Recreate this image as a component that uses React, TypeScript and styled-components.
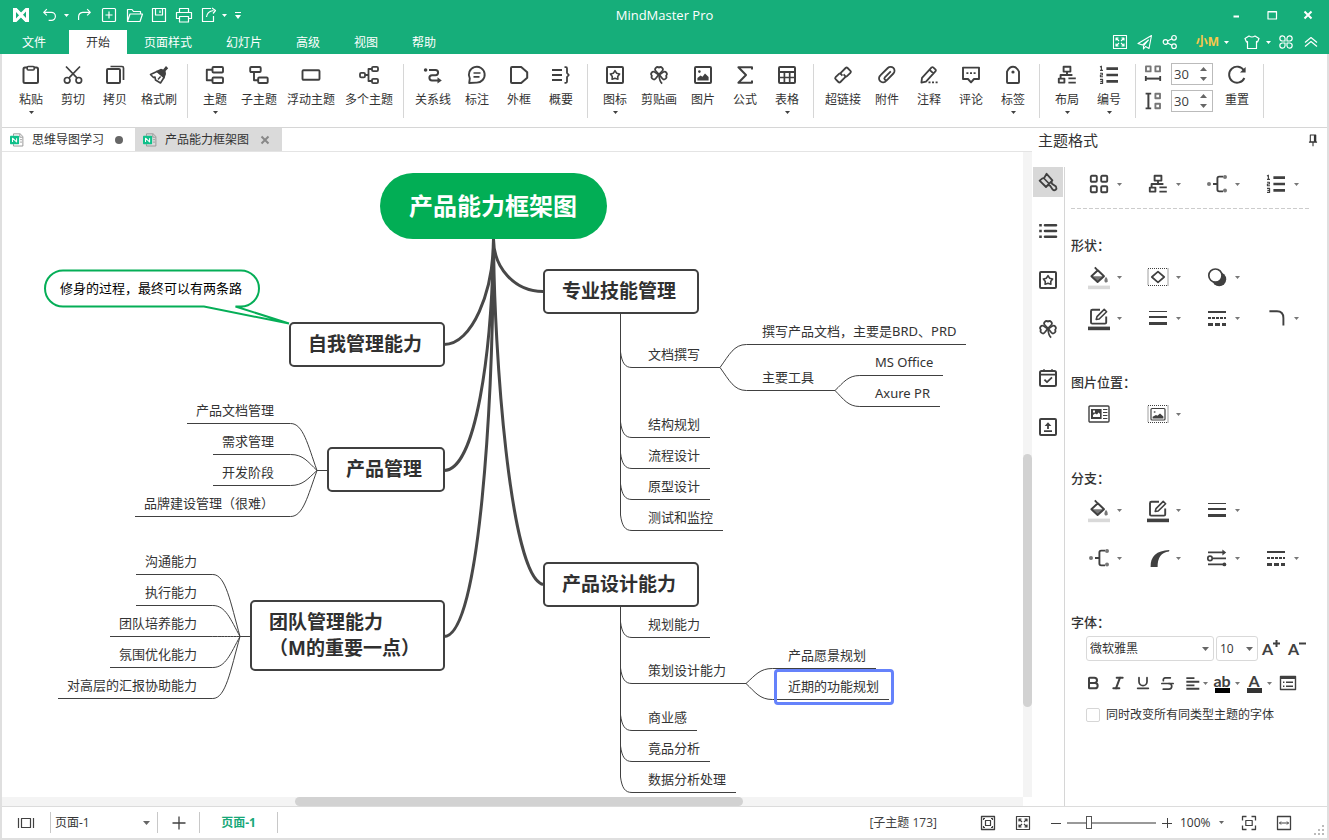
import React, { useState } from "react";
import type { ReactNode } from "react";
import styled, { createGlobalStyle, css } from "styled-components";
import { Bold, Italic, Underline, Strikethrough } from "lucide-react";

const GREEN = "#16ae7a";
const INK = "#404040";
const LINE = "#d6d6d6";

const GlobalStyle = createGlobalStyle`
  *, *::before, *::after { box-sizing: border-box; }
  body {
    margin: 0;
    background: #fff;
    color: #333;
    font: 12px/16px "Open Sans", "Noto Sans CJK SC", sans-serif;
  }
  button, input, select { font: inherit; color: inherit; }
  button {
    margin: 0;
    padding: 0;
    border: 0;
    background: none;
    cursor: pointer;
  }
  svg { display: block; flex: none; }
`;

/* ---------- icons ---------- */

const shapes: Record<string, ReactNode> = {
  paste: (
    <>
      <rect x="2.5" y="2.5" width="14.5" height="15.5" rx="1.5" />
      <rect x="6.2" y="1.5" width="7" height="3.5" rx="1" fill="#fff" strokeWidth="1.6" />
    </>
  ),
  cut: (
    <g strokeWidth="1.7">
      <circle cx="4.2" cy="15.3" r="2.8" />
      <circle cx="15.8" cy="15.3" r="2.8" />
      <path d="M3 1.5 14.2 13.2M17 1.5 5.8 13.2" />
    </g>
  ),
  copy: (
    <>
      <rect x="2" y="4" width="13" height="14" rx="1" />
      <path d="M5.5 1.5H17Q18.5 1.5 18.5 3V15" strokeWidth="1.7" />
    </>
  ),
  brush: (
    <>
      <path d="M8 6.5 1.5 9.5 4.5 12.5 6 12 6.5 15 11.5 18 15 12.5Z" strokeWidth="1.6" />
      <path d="M7 6 12 3.8 14.2 4.4 17 1 19.2 3.2 16.6 6 17 9 15.4 13.5Z" fill="currentColor" stroke="none" />
      <path d="M9 14.5 11.6 11.5" strokeWidth="1.4" />
    </>
  ),
  topic: (
    <g strokeWidth="1.9">
      <rect x="7.5" y="2" width="10.5" height="5.5" rx="1" />
      <rect x="7.5" y="12.5" width="10.5" height="5.5" rx="1" />
      <path d="M7.5 4.8H1.8V15.2H7.5" />
    </g>
  ),
  subtopic: (
    <g strokeWidth="1.9">
      <rect x="1.2" y="2" width="10.5" height="5" rx="1" />
      <rect x="9.2" y="12.5" width="9.5" height="5.5" rx="1" />
      <path d="M5 7V15.2H9.2" />
    </g>
  ),
  floating: <rect x="1.5" y="5.2" width="17" height="9.6" rx="1" strokeWidth="1.9" />,
  multi: (
    <g strokeWidth="1.8">
      <rect x="1" y="7.8" width="5" height="4.6" rx="1.2" />
      <rect x="13" y="1.8" width="6" height="4.4" rx="1.2" />
      <rect x="13" y="13.8" width="6" height="4.4" rx="1.2" />
      <path d="M6 10H9.5M13 4H9.5V16H13" />
    </g>
  ),
  relation: (
    <>
      <circle cx="2.6" cy="5" r="1.8" fill="currentColor" stroke="none" />
      <path d="M6 5H12.5A2.6 2.6 0 0 1 12.5 10.2H9A2.6 2.6 0 0 0 9 15.4H15" />
      <path d="M14.5 12.2 18.8 15.4 14.5 18.4Z" fill="currentColor" stroke="none" />
    </>
  ),
  callout: (
    <>
      <path d="M2.2 18 2.8 13.4A7.9 7.9 0 1 1 9.5 17.6Z" strokeWidth="1.9" />
      <path d="M6.5 8H13.5M6.5 11.8H12.5" strokeWidth="1.7" />
    </>
  ),
  boundary: <path d="M2 3Q2 2 3 2H12.2L18.2 7.2V12.8L12.2 18H3Q2 18 2 17Z" />,
  summary: (
    <>
      <path d="M1 5H11M1 10H11M1 15H11" />
      <path d="M13.5 2.2H15Q16 2.2 16 3.4V8L17.8 10 16 12V16.6Q16 17.8 15 17.8H13.5" strokeWidth="1.8" />
    </>
  ),
  mark: (
    <>
      <rect x="2" y="2" width="16" height="16" rx="1" />
      <path d="M10 5.6 11.6 8.2 14.6 9 12.7 11.4 12.9 14.3 10 13.3 7.1 14.3 7.3 11.4 5.4 9 8.4 8.2Z" strokeWidth="1.6" />
    </>
  ),
  clover: (
    <g strokeWidth="1.7">
      <path d="M10 9.4 6.8 6A2.3 2.3 0 0 1 10 2.7 2.3 2.3 0 0 1 13.2 6Z" />
      <path d="M10 9.4 6.8 6A2.3 2.3 0 0 1 10 2.7 2.3 2.3 0 0 1 13.2 6Z" transform="rotate(-98 10 9.8)" />
      <path d="M10 9.4 6.8 6A2.3 2.3 0 0 1 10 2.7 2.3 2.3 0 0 1 13.2 6Z" transform="rotate(98 10 9.8)" />
      <path d="M10 10Q10.4 16.5 13.2 18.6" />
    </g>
  ),
  picture: (
    <>
      <rect x="2" y="2" width="16" height="16" rx="1" />
      <circle cx="6.4" cy="6.6" r="1.3" fill="currentColor" stroke="none" />
      <path d="M4.4 15.6V13L7.5 10.4 9.5 11.8 12 8.6 15.6 12V15.6Z" fill="currentColor" stroke="none" />
    </>
  ),
  formula: <path d="M17 4.6V2.2H3.4L11 10 3.4 17.8H17V15.4" />,
  table: (
    <>
      <rect x="2" y="2" width="16" height="16" rx="1" />
      <path d="M2 7H18" />
      <path d="M2 12.5H18M7.4 8V18M12.7 8V18" strokeWidth="1.7" />
    </>
  ),
  link: (
    <g strokeWidth="1.8">
      <path d="M9.4 10.6 8 9.2Q7.2 8.4 8 7.6L12.6 3Q13.6 2 14.6 3L17.4 5.8Q18.4 6.8 17.4 7.8L14 11.2Q13 12.2 12 11.2" />
      <path d="M10.6 9.4 12 10.8Q12.8 11.6 12 12.4L7.4 17Q6.4 18 5.4 17L2.6 14.2Q1.6 13.2 2.6 12.2L6 8.8Q7 7.8 8 8.8" />
    </g>
  ),
  clip: (
    <path
      d="m13.8 6.4-6 6a1.7 1.7 0 0 0 2.4 2.4l6.2-6.3a3.9 3.9 0 1 0-5.6-5.5l-7.2 7.2a4 4 0 1 0 5.6 5.6l1-1"
      strokeWidth="1.8"
    />
  ),
  note: (
    <>
      <path d="M3 12.8 12.6 2.4Q13.4 1.8 14.2 2.4L16.6 4.6Q17.2 5.4 16.6 6.2L7 16.6 2.4 17.6ZM10.6 4.8 14.4 8.4" strokeWidth="1.8" />
      <path d="M9.5 17.4h2M13 17.4h2M16.6 17.4h2" strokeWidth="1.6" />
    </>
  ),
  comment: (
    <>
      <path d="M2 2.6H18V14H13L10 17.4 7 14H2Z" strokeWidth="1.9" />
      <path d="M5.4 8.2h2M9 8.2h2M12.6 8.2h2" strokeWidth="1.8" />
    </>
  ),
  tag: (
    <>
      <path d="M4 17V6.6Q6.4 1.8 10 1.8T16 6.6V17Q16 18 15 18H5Q4 18 4 17Z" strokeWidth="1.9" />
      <circle cx="10" cy="7" r="1.6" fill="currentColor" stroke="none" />
    </>
  ),
  layout: (
    <g strokeWidth="1.9">
      <rect x="6.6" y="1.8" width="6.8" height="4.8" />
      <path d="M10 6.6V9.8M3.6 13.6V10H15.4M11.4 13.4H18.8M11.4 17.6H18.8" />
      <rect x="1.8" y="13.6" width="5.6" height="4" />
    </g>
  ),
  numbering: (
    <>
      <path d="M7.4 3.6H19M7.4 10H19M7.4 16.4H19" strokeWidth="2.6" />
      <path d="M1 2 2.4 1.2V5.4M1 5.4H4M1 8.2H3.4V10H1.4V11.8H4M1 14.4H3.6V18.4H1M1.4 16.4H3.6" strokeWidth="1.1" />
    </>
  ),
  hgap: (
    <>
      <path d="M3 2.4H7.6V7.4H3ZM12.4 2.4H17V7.4H12.4Z" stroke="#777" strokeWidth="1.9" />
      <path d="M2.6 14.6H17.4" />
      <path d="M2.8 12V17M17.2 12V17" strokeWidth="1.8" />
    </>
  ),
  vgap: (
    <>
      <path d="M12.4 2.8H17V7.2H12.4ZM12.4 12.8H17V17.2H12.4Z" stroke="#777" strokeWidth="1.9" />
      <path d="M5.4 2.6V17.4" />
      <path d="M2.6 2.6H8.2M2.6 17.4H8.2" strokeWidth="1.8" />
    </>
  ),
  reset: (
    <>
      <path d="M17 5.6A8 8 0 1 0 17.4 13" strokeWidth="1.9" />
      <path d="M18.6 2V7.6H13Z" fill="currentColor" stroke="none" />
    </>
  ),
  undo: <path d="M6.5 3.5 3 7 6.5 10.5M3 7H11.5A4.5 4.5 0 0 1 11.5 16H8.5" />,
  redo: <path d="M13.5 3.5 17 7 13.5 10.5M17 7H8.5Q4 7.6 4 12V15.5" />,
  newDoc: (
    <>
      <rect x="3.5" y="3.5" width="13" height="13" rx="1" />
      <path d="M10 6.5V13.5M6.5 10H13.5" />
    </>
  ),
  folder: <path d="M3.5 16.5V4.5H8L9.5 6.5H16.5V9M3.5 16.5 6 9H18.5L16 16.5Z" />,
  save: <path d="M3.5 3.5H16.5V16.5H3.5ZM6.5 3.5V10H13.5V3.5M11 5.5V8" />,
  print: (
    <>
      <path d="M5.5 7V3.5H14.5V7M5.5 13.5H2.5V7.5H17.5V13.5H14.5" />
      <rect x="5.5" y="11.5" width="9" height="5.5" />
    </>
  ),
  exportDoc: <path d="M12 3.5H3.5V16.5H14.5V11M7.5 12Q8 6.5 14.5 5.5M13 3 16.5 5.5 14 8.5" />,
  fullscreenBox: (
    <>
      <rect x="3.5" y="3.5" width="13" height="13" />
      <path d="M9 9 6 6M6 8.5V6H8.5M11 9 14 6M11.5 6H14V8.5M9 11 6 14M6 11.5V14H8.5M11 11 14 14M14 11.5V14H11.5" />
    </>
  ),
  plane: <path d="M16.5 3.5 3 11.5 7.5 13 13.5 8 8.5 14V17L10.5 14.5 14 16.5Z" />,
  share: (
    <>
      <circle cx="5.5" cy="10" r="2.3" />
      <circle cx="14" cy="5.8" r="2.3" />
      <circle cx="14" cy="14.2" r="2.3" />
      <path d="M7.5 9 12 6.8M7.5 11 12 13.2" />
    </>
  ),
  shirt: <path d="M7 4Q10 6 13 4L17 6.5 15.5 10 14.5 9.5V16.5H5.5V9.5L4.5 10 3 6.5Z" />,
  apps: <path d="M9 9H6A2.6 2.6 0 1 1 9 6ZM11 9H14A2.6 2.6 0 1 0 11 6ZM9 11H6A2.6 2.6 0 1 0 9 14ZM11 11H14A2.6 2.6 0 1 1 11 14Z" />,
  chevrons: <path d="M4 10.5 10 5.5 16 10.5M4 14.5 10 9.5 16 14.5" />,
  minimize: <path d="M7.5 11.5H13" strokeWidth="2" />,
  maximize: <path d="M6 6.5H14.5V14H6ZM6 7H14.5" strokeWidth="1.2" />,
  close: <path d="M6.5 6.5 13.5 13.5M13.5 6.5 6.5 13.5" strokeWidth="2" />,
  pin: (
    <g strokeWidth="1.2">
      <path d="M7 4.5H13V12H7ZM5.5 12.4H14.5M10 12.4V17" />
      <path d="M11 4.5H13.4V12H11Z" fill="currentColor" stroke="none" />
    </g>
  ),
  paintbrush: (
    <>
      <path d="M8.6 1.8 14.4 8.4 8 15 1.6 8.6 4.4 6.4 6 6.2Z" strokeWidth="1.8" />
      <path d="M5.4 5.8 11.4 12" strokeWidth="1.6" />
      <path d="M13.4 9.6 14 11.8 18 14.6Q19 16.4 17.6 17.8 16 19 14.6 17.4L12 13.6 9.8 13.2" strokeWidth="1.8" />
    </>
  ),
  list: (
    <>
      <path d="M7 4.2H18M7 10H18M7 15.8H18" strokeWidth="2.6" strokeLinecap="round" />
      <path d="M1.2 4.2h2.6M1.2 10h2.6M1.2 15.8h2.6" strokeWidth="2.4" />
    </>
  ),
  calendar: (
    <>
      <rect x="2" y="3" width="16" height="15" rx="1.5" />
      <path d="M2 6.6H18M6 1.2V4M14 1.2V4" strokeWidth="1.7" />
      <path d="M6.4 11.6 9 14.2 14 9.4" strokeWidth="1.8" />
    </>
  ),
  upload: (
    <>
      <rect x="2" y="2" width="16" height="16" rx="1" />
      <path d="M6 14.2H14M10 12V7.4" strokeWidth="1.8" />
      <path d="M6.6 9 10 5.2 13.4 9Z" fill="currentColor" stroke="none" />
    </>
  ),
  tiles: (
    <g strokeWidth="1.9">
      <rect x="1.8" y="1.8" width="6" height="6" rx="1" />
      <rect x="12.2" y="1.8" width="6" height="6" rx="1" />
      <rect x="1.8" y="12.2" width="6" height="6" rx="1" />
      <rect x="12.2" y="12.2" width="6" height="6" rx="1" />
    </g>
  ),
  branch: (
    <>
      <path d="M6 10H10.4M16 2.6H12.2Q10.4 2.6 10.4 4.4V15.6Q10.4 17.4 12.2 17.4H16" strokeWidth="1.9" />
      <g fill="#777" stroke="none">
        <circle cx="2" cy="10" r="2" />
        <circle cx="18" cy="3" r="2" />
        <circle cx="18" cy="16.6" r="2" />
      </g>
    </>
  ),
  fill: (
    <>
      <path d="M3.4 9.2H14.8L8.6 15Z" fill="#777" stroke="none" />
      <path d="M8.8 3.2 15 9.2 8.6 15 2.4 9.2ZM5.8 0.4 9.6 4.4" strokeWidth="1.9" />
      <path d="M17 9.8Q19.4 12.6 18.8 14.4 17.8 15.8 16 15.2 14.4 13.6 17 9.8Z" fill="#777" stroke="none" />
      <path d="M-1 20.4H21" stroke="#d9d9d9" strokeWidth="3.6" />
    </>
  ),
  dashedShape: (
    <>
      <rect x="0" y="1.5" width="20" height="17" strokeWidth="1" strokeDasharray="1 1" />
      <path d="M10 4.6 16.2 10 10 15.4 3.8 10Z" strokeWidth="1.7" />
    </>
  ),
  shadow: (
    <>
      <circle cx="12.2" cy="12.2" r="7" fill="currentColor" stroke="none" />
      <circle cx="8.4" cy="8.6" r="6.6" fill="#fff" strokeWidth="1.7" />
    </>
  ),
  outline: (
    <>
      <path d="M11 1.8H3.4Q2 1.8 2 3.2V14.6Q2 15.6 3.2 15.6H16Q17.2 15.6 17.2 14.4V8.6" strokeWidth="1.9" />
      <path d="M7.2 11.4 8 8.6 15.2 1.4 17.6 3.8 10.2 11Z" strokeWidth="1.6" />
      <path d="M-1 20.4H21" strokeWidth="3.6" />
    </>
  ),
  lineWidth: (
    <>
      <path d="M1 3.5H19" strokeWidth="1" />
      <path d="M1 9H19" strokeWidth="2" />
      <path d="M1 15.5H19" strokeWidth="3" />
    </>
  ),
  lineDash: (
    <>
      <path d="M1 4H19" strokeWidth="2" />
      <path d="M1 10H19" strokeWidth="2" strokeDasharray="3 1" />
      <path d="M1 16.5H19" strokeWidth="3" strokeDasharray="5 2" />
    </>
  ),
  corner: <path d="M3.4 3.2H11Q17.4 3.2 17.4 10V17.4" strokeWidth="1.9" />,
  imageLeft: (
    <>
      <rect x="0" y="2" width="20" height="16" rx="1" strokeWidth="1.4" />
      <rect x="2" y="5" width="10.6" height="10" fill="currentColor" stroke="none" />
      <path d="M4 13V11L6 9.6 8 10.4 9.6 8.6 11 10V13ZM4 6.6H6V8.6H4Z" fill="#fff" stroke="none" />
      <path d="M14 5.5H18.4M14 8.5H18.4M14 11.5H18.4M14 14.5H18.4" strokeWidth="1" />
    </>
  ),
  imageFrame: (
    <>
      <rect x="0" y="1.5" width="20" height="17" strokeWidth="1" strokeDasharray="1 1" />
      <rect x="3" y="4.5" width="14" height="11.5" rx="1" strokeWidth="1.2" />
      <circle cx="6.6" cy="8" r="1" fill="#777" stroke="none" />
      <path d="M4.6 14.4V12.8L8 11 9.4 11.8 12 9.6 15.4 12.4V14.4Z" fill="currentColor" stroke="none" />
    </>
  ),
  taper: <path d="M2.6 19Q2 3 21.4 2L21 3.4Q9.4 4.6 9.6 19Z" fill="currentColor" stroke="none" />,
  arrows: (
    <>
      <path d="M1 4.4H16M6 10.4H19M1 16.4H16" strokeWidth="1.9" />
      <circle cx="3" cy="10.4" r="2.2" fill="#fff" strokeWidth="1.7" />
      <path d="M15.4 1.4 19.2 4.4 15.4 7.4Z" fill="currentColor" stroke="none" />
      <circle cx="17.4" cy="16.4" r="1.9" fill="currentColor" stroke="none" />
    </>
  ),
  alignLeft: <path d="M2.6 4.6H11.6M2.6 8.6H17M2.6 12.6H11.6M2.6 16.4H17" strokeWidth="2.1" />,
  listBox: (
    <>
      <rect x="2.5" y="3.5" width="15" height="13" strokeWidth="1.4" />
      <path d="M2.5 4.8H17.5" strokeWidth="2.4" />
      <path d="M8 9.2H15M8 13.2H15M5 9.2h1.4M5 13.2h1.4" strokeWidth="1.4" />
    </>
  ),
  filmstrip: <path d="M2.5 5V15M17.5 5V15M5.5 5.5H14.5V14.5H5.5Z" strokeWidth="1.2" />,
  plus: <path d="M10 3.5V16.5M3.5 10H16.5" strokeWidth="1.3" />,
  fitPage: (
    <>
      <rect x="3.5" y="3.5" width="13" height="13" strokeWidth="1.3" />
      <rect x="7.5" y="7.5" width="5" height="5" strokeWidth="1.2" />
      <path d="M5.5 7V5.5H7M13 5.5H14.5V7M5.5 13V14.5H7M13 14.5H14.5V13" />
    </>
  ),
  focus: (
    <>
      <path d="M3.5 7.5V3.5H7.5M12.5 3.5H16.5V7.5M3.5 12.5V16.5H7.5M12.5 16.5H16.5V12.5" strokeWidth="1.3" />
      <rect x="6.8" y="7.5" width="6.4" height="5" strokeWidth="1.2" />
    </>
  ),
  fitWidth: (
    <>
      <rect x="3.5" y="3.5" width="13" height="13" strokeWidth="1.3" />
      <path d="M5.5 10H14.5M7 8.5 5.5 10 7 11.5M13 8.5 14.5 10 13 11.5" strokeWidth="1" />
    </>
  ),
  fileMark: (
    <>
      <path d="M5 4V1.2H14.5L18.4 5V18.6H5V16M14 1.6V6H18M14.5 9.5H17M14.5 13H17" stroke="#999" strokeWidth="1.4" />
      <rect x="0" y="4" width="13" height="12" rx="1" fill="#0fc08a" stroke="none" />
      <path d="M3.6 12.8V7.4L9.4 12.8V7.4" stroke="#fff" strokeWidth="1.5" />
    </>
  ),
};

interface IconProps {
  name: string;
  size?: number;
  weight?: number;
}

function Icon({ name, size = 20, weight = 2 }: IconProps) {
  return (
    <svg
      width={size}
      height={size}
      viewBox="0 0 20 20"
      fill="none"
      stroke="currentColor"
      strokeWidth={weight}
      strokeLinejoin="round"
      overflow="visible"
      aria-hidden="true"
    >
      {shapes[name]}
    </svg>
  );
}

function Caret({ width = 5, up = false }: { width?: number; up?: boolean }) {
  return (
    <svg width={width} height={width > 5 ? 4 : 3} viewBox="0 0 6 3" preserveAspectRatio="none" aria-hidden="true">
      <path d={up ? "M0 3H6L3 0Z" : "M0 0H6L3 3Z"} fill="currentColor" />
    </svg>
  );
}

/* ---------- shell ---------- */

const Shell = styled.div`
  display: flex;
  flex-direction: column;
  height: 100vh;
  overflow: hidden;
`;

const Body = styled.div`
  display: flex;
  flex: 1;
  flex-direction: column;
  min-height: 0;
  border: solid #dfdfdf;
  border-width: 0 2px 2px;
`;

/* ---------- title bar ---------- */

const TitleBar = styled.header`
  background: ${GREEN};
  color: #fff;
`;

const TitleRow = styled.div`
  display: grid;
  grid-template-columns: 1fr auto 1fr;
  align-items: center;
  height: 30px;
  padding: 0 3px 0 13px;
`;

const QuickTools = styled.div`
  display: flex;
  align-items: center;
`;

const Logo = styled.svg`
  margin-right: 8px;
`;

const BarButton = styled.button<{ $width?: number }>`
  display: flex;
  align-items: center;
  justify-content: center;
  width: ${(p) => p.$width ?? 25}px;
  height: 24px;
`;

const AppTitle = styled.h1`
  margin: 0;
  padding-right: 10px;
  font-size: 13px;
  font-weight: 400;
`;

const WindowControls = styled.div`
  display: flex;
  justify-content: flex-end;
`;

const MenuRow = styled.div`
  display: flex;
  justify-content: space-between;
  height: 24px;
  padding: 0 6px 0 5px;
`;

const Menu = styled.nav`
  display: flex;
`;

const MenuTab = styled.button<{ $active?: boolean; $first?: boolean }>`
  padding: 2px 17px 0;
  margin-right: ${(p) => (p.$first ? 6 : 0)}px;
  white-space: nowrap;
  ${(p) =>
    p.$active &&
    css`
      background: #fff;
      color: #333;
    `}
`;

const Account = styled.button`
  display: flex;
  align-items: center;
  gap: 5px;
  padding: 0 10px 0 13px;
  color: #fff;
`;

const AccountName = styled.span`
  color: #fac84b;
  font-weight: 700;
`;

/* ---------- ribbon ---------- */

const Ribbon = styled.div`
  display: flex;
  flex: none;
  height: 74px;
  padding: 0 0 0 8px;
  border-bottom: 1px solid ${LINE};
  overflow: hidden;
`;

const RibbonGroup = styled.div`
  display: flex;
  flex: none;
  align-items: flex-start;
  &::after {
    content: "";
    align-self: center;
    width: 1px;
    height: 54px;
    margin: 0 6px 0 5px;
    background: ${LINE};
  }
`;

const RibbonButton = styled.button`
  display: flex;
  flex-direction: column;
  align-items: center;
  min-width: 42px;
  height: 66px;
  padding: 11px 5px 0;
  color: ${INK};
  white-space: nowrap;
  & > span {
    margin: 7px 0 3px;
    color: #333;
  }
`;

const SpacingTools = styled.div`
  display: grid;
  grid-template-columns: 20px 42px;
  column-gap: 8px;
  row-gap: 5px;
  align-items: center;
  padding: 9px 3px 0 1px;
  color: ${INK};
`;

const Spinner = styled.div`
  display: flex;
  align-items: center;
  height: 22px;
  padding: 0 5px 0 2px;
  border: 1px solid #bbb;
  input {
    width: 27px;
    min-width: 0;
    padding: 0;
    border: 0;
    outline: 0;
    background: none;
    appearance: textfield;
    font-size: 13px;
  }
  input::-webkit-inner-spin-button { appearance: none; }
`;

const SpinButtons = styled.div`
  display: flex;
  flex-direction: column;
  gap: 6px;
  color: #666;
  button { display: block; height: 4px; }
`;

/* ---------- workspace ---------- */

const Workspace = styled.main`
  display: flex;
  flex: 1;
  min-height: 0;
`;

const Documents = styled.section`
  display: flex;
  flex: 1;
  flex-direction: column;
  min-width: 0;
`;

const DocTabs = styled.div`
  display: flex;
  flex: none;
  height: 24px;
  border-bottom: 1px solid #e4e4e4;
`;

const DocTab = styled.div<{ $active?: boolean }>`
  display: flex;
  align-items: center;
  gap: 10px;
  padding: 0 11px 0 8px;
  background: ${(p) => (p.$active ? "#dadada" : "#fff")};
`;

const DocName = styled.button`
  display: flex;
  align-items: center;
  gap: 8px;
  white-space: nowrap;
`;

const UnsavedDot = styled.span`
  width: 10px;
  height: 10px;
  border: 1px solid transparent;
  border-radius: 50%;
  background: #666 padding-box;
`;

const CloseTab = styled.button`
  display: flex;
  justify-content: center;
  width: 12px;
  color: #888;
`;

const CanvasGrid = styled.div`
  display: grid;
  flex: 1;
  grid-template-columns: 1fr 9px;
  grid-template-rows: 1fr 9px;
  min-height: 0;
`;

const Canvas = styled.div`
  position: relative;
  overflow: hidden;
`;

const VTrack = styled.div`
  padding-top: 302px;
  background: #f4f4f4;
`;

const HTrack = styled.div`
  padding-left: 293px;
  background: #f4f4f4;
`;

const Thumb = styled.div<{ $vertical?: boolean }>`
  width: ${(p) => (p.$vertical ? "9px" : "448px")};
  height: ${(p) => (p.$vertical ? "253px" : "9px")};
  border-radius: 5px;
  background: #d2d2d2;
`;

/* ---------- mind map ---------- */

interface Placed {
  $x: number;
  $y: number;
}

const Links = styled.svg`
  position: absolute;
  top: 0;
  left: 0;
`;

const RootTopic = styled.div<Placed>`
  position: absolute;
  left: ${(p) => p.$x}px;
  top: ${(p) => p.$y}px;
  padding: 0 30px 0 29px;
  border-radius: 33px;
  background: #02ae55;
  color: #fff;
  font-size: 24px;
  font-weight: 700;
  line-height: 66px;
  white-space: nowrap;
`;

const MainTopic = styled.div<Placed & { $w: number }>`
  position: absolute;
  left: ${(p) => p.$x}px;
  top: ${(p) => p.$y}px;
  width: ${(p) => p.$w}px;
  padding: 7px 0 8px 17px;
  border: 2px solid ${INK};
  border-radius: 5px;
  background: #fff;
  color: #303030;
  font-size: 19px;
  font-weight: 700;
  line-height: 26px;
  white-space: pre;
`;

const Leaf = styled.div<Placed>`
  position: absolute;
  left: ${(p) => p.$x}px;
  top: ${(p) => p.$y - 24}px;
  height: 25px;
  padding: 0 10px 0 9px;
  border-bottom: 1px solid ${INK};
  font-family: "Noto Sans", "Noto Sans CJK SC", sans-serif;
  font-size: 13px;
  line-height: 22px;
  white-space: nowrap;
`;

const Selection = styled.div<Placed>`
  position: absolute;
  left: ${(p) => p.$x}px;
  top: ${(p) => p.$y}px;
  width: 120px;
  height: 36px;
  border: 3px solid #6582fb;
  border-radius: 4px;
`;

const CalloutText = styled.div<Placed>`
  position: absolute;
  left: ${(p) => p.$x}px;
  top: ${(p) => p.$y}px;
  color: #000;
  font-size: 13px;
  line-height: 20px;
  white-space: nowrap;
`;

const mainTopics = [
  { text: "专业技能管理", x: 541, y: 117, w: 156 },
  { text: "自我管理能力", x: 287, y: 170, w: 156 },
  { text: "产品管理", x: 325, y: 295, w: 118 },
  { text: "团队管理能力\n（M的重要一点）", x: 248, y: 448, w: 195 },
  { text: "产品设计能力", x: 541, y: 410, w: 156 },
];

const trunkPaths = [
  "M491.5 87C491.5 115 512 139.5 541 139.5",
  "M491.5 87C491.5 140 470 192.5 442 192.5",
  "M491.5 87C490 200 474 318.5 442 318.5",
  "M491.5 87C491 250 478 484.5 442 484.5",
  "M491.5 87C492 200 508 425 541 432.5",
];

type LeafData = [text: string, x: number, y: number];

const spineLeaves: LeafData[][] = [
  [
    ["文档撰写", 637, 215],
    ["结构规划", 637, 285],
    ["流程设计", 637, 316],
    ["原型设计", 637, 347],
    ["测试和监控", 637, 378],
  ],
  [
    ["规划能力", 637, 485],
    ["策划设计能力", 637, 531],
    ["商业感", 637, 578],
    ["竟品分析", 637, 609],
    ["数据分析处理", 637, 640],
  ],
];

interface Fan {
  from: [number, number];
  stub: number;
  edge: number;
  leaves: LeafData[];
}

const fans: Fan[] = [
  {
    from: [718, 215],
    stub: 705,
    edge: 751,
    leaves: [
      ["撰写产品文档，主要是BRD、PRD", 751, 192],
      ["主要工具", 751, 238],
    ],
  },
  {
    from: [833, 238],
    stub: 818,
    edge: 864,
    leaves: [
      ["MS Office", 864, 223],
      ["Axure PR", 864, 254],
    ],
  },
  {
    from: [744, 531],
    stub: 730,
    edge: 777,
    leaves: [
      ["产品愿景规划", 777, 516],
      ["近期的功能规划", 777, 547],
    ],
  },
  {
    from: [315, 318],
    stub: 325,
    edge: 282,
    leaves: [
      ["产品文档管理", 185, 271],
      ["需求管理", 211, 302],
      ["开发阶段", 211, 333],
      ["品牌建设管理（很难）", 133, 364],
    ],
  },
  {
    from: [238, 484],
    stub: 248,
    edge: 204,
    leaves: [
      ["沟通能力", 134, 422],
      ["执行能力", 134, 453],
      ["团队培养能力", 108, 484],
      ["氛围优化能力", 108, 515],
      ["对高层的汇报协助能力", 56, 546],
    ],
  },
];

function fanPath(fan: Fan, leafY: number) {
  const [x, y] = [fan.from[0], fan.from[1] + 0.5];
  const w = fan.edge - x;
  const end = leafY + 0.5;
  return `M${x} ${y}C${x + w * 0.28} ${y + (end - y) * 0.55} ${x + w * 0.42} ${end} ${x + w * 0.8} ${end}H${fan.edge}`;
}

const spineTops = [162, 455];

function MindMap() {
  const leaves = [...spineLeaves.flat(), ...fans.flatMap((f) => f.leaves)];
  return (
    <Canvas>
      <Links width="1021" height="645" fill="none" stroke={INK} aria-hidden="true">
        {trunkPaths.map((d) => (
          <path key={d} d={d} strokeWidth="3" stroke="#484848" />
        ))}
        {spineLeaves.map((group, i) => (
          <g key={i}>
            <path d={`M618.5 ${spineTops[i]}V${group[group.length - 1][2] - 15}`} />
            {group.map(([text, x, y]) => (
              <path key={text} d={`M618.5 ${y - 15}C620 ${y - 4} 623 ${y + 0.5} 630 ${y + 0.5}H${x}`} />
            ))}
          </g>
        ))}
        {fans.map((fan) => (
          <g key={fan.edge + fan.from[1]}>
            <path d={`M${fan.from[0]} ${fan.from[1] + 0.5}H${fan.stub}`} />
            {fan.leaves.map(([text, , y]) => (
              <path key={text} d={fanPath(fan, y)} />
            ))}
          </g>
        ))}
        <path
          d="M61 118.5H239A18 18 0 0 1 239 154.5H233.5L287 171.5 202 154.5H61A18 18 0 0 1 61 118.5Z"
          stroke="#05ae57"
          strokeWidth="2"
          fill="#fff"
        />
      </Links>
      <CalloutText $x={58} $y={126}>修身的过程，最终可以有两条路</CalloutText>
      <RootTopic $x={378} $y={21}>产品能力框架图</RootTopic>
      {mainTopics.map((t) => (
        <MainTopic key={t.text} $x={t.x} $y={t.y} $w={t.w}>{t.text}</MainTopic>
      ))}
      {leaves.map(([text, x, y]) => (
        <Leaf key={text} $x={x} $y={y}>{text}</Leaf>
      ))}
      <Selection $x={772} $y={517} />
    </Canvas>
  );
}

/* ---------- format panel ---------- */

const Panel = styled.aside`
  display: flex;
  flex: none;
  flex-direction: column;
  width: 295px;
`;

const PanelHeader = styled.div`
  display: flex;
  align-items: center;
  justify-content: space-between;
  height: 24px;
  padding: 0 4px 0 6px;
`;

const PanelTitle = styled.h2`
  margin: 0;
  font-size: 15px;
  font-weight: 400;
`;

const PanelBody = styled.div`
  display: flex;
  flex: 1;
  min-height: 0;
  padding-top: 15px;
`;

const Rail = styled.nav`
  display: flex;
  flex-direction: column;
  gap: 19px;
  padding: 0 1px;
`;

const RailButton = styled.button<{ $active?: boolean }>`
  display: flex;
  align-items: center;
  justify-content: center;
  width: 30px;
  height: 30px;
  color: ${INK};
  background: ${(p) => (p.$active ? "#d8d8d8" : "none")};
`;

const PanelContent = styled.div`
  flex: 1;
  min-width: 0;
  padding: 5px 17px 0 6px;
  border-left: 1px solid ${LINE};
`;

const ToolGrid = styled.div<{ $gap?: number }>`
  display: grid;
  grid-template-columns: repeat(4, 59px);
  row-gap: ${(p) => p.$gap ?? 17}px;
  margin-right: -13px;
  padding-left: 16px;
`;

const ToolButton = styled.button<{ $column?: number }>`
  display: flex;
  align-items: center;
  gap: 8px;
  height: 24px;
  padding-left: 2px;
  grid-column: ${(p) => p.$column ?? "auto"};
  color: ${INK};
  & > svg:last-child:not(:first-child) { color: #777; }
`;

const Divider = styled.hr`
  height: 1px;
  margin: 12px 0 0;
  border: 0;
  background: repeating-linear-gradient(90deg, #ccc 0 4px, transparent 4px 6px);
`;

const SectionTitle = styled.h3<{ $tight?: boolean }>`
  margin: ${(p) => (p.$tight ? 26 : 42)}px 0 10px;
  font-size: 13px;
  font-weight: 500;
  line-height: 20px;
`;

const FontRow = styled.div`
  display: flex;
  align-items: center;
  gap: 2px;
  margin-top: -6px;
  padding-left: 15px;
`;

const SelectBox = styled.div<{ $width: number; $plain?: boolean }>`
  display: grid;
  flex: none;
  align-items: center;
  width: ${(p) => p.$width}px;
  color: #666;
  & > * { grid-area: 1 / 1; }
  & > svg { justify-self: end; margin-right: ${(p) => (p.$plain ? 0 : 5)}px; pointer-events: none; }
  select {
    width: 100%;
    height: ${(p) => (p.$plain ? 20 : 25)}px;
    padding: 0 0 0 ${(p) => (p.$plain ? 0 : 3)}px;
    border: ${(p) => (p.$plain ? "0" : "1px solid #d9d9d9")};
    border-radius: 3px;
    appearance: none;
    background: transparent;
    color: #333;
  }
`;

const SizeButton = styled.button`
  display: flex;
  width: 24px;
  height: 24px;
  padding-left: 2px;
  color: ${INK};
  font: 700 16px/24px Lato, sans-serif;
  svg { margin-top: 3px; }
`;

const FormatRow = styled.div`
  display: flex;
  align-items: center;
  margin-top: 10px;
  padding-left: 9px;
`;

const FormatButton = styled.button<{ $width?: number }>`
  display: flex;
  align-items: center;
  justify-content: center;
  gap: 1px;
  width: ${(p) => p.$width ?? 25}px;
  height: 24px;
  color: ${INK};
  & > svg:last-child:not(:first-child) { color: #777; }
`;

const Swatch = styled.span<{ $color: string }>`
  display: flex;
  justify-content: center;
  width: 15px;
  height: 19px;
  margin-right: 4px;
  border-bottom: 5px solid ${(p) => p.$color};
  font: 700 16px/14px Lato, sans-serif;
`;

const CheckLabel = styled.label`
  display: flex;
  align-items: center;
  gap: 6px;
  margin-top: 12px;
  padding-left: 15px;
  input {
    width: 14px;
    height: 14px;
    margin: 0;
    border: 1px solid #d6d6d6;
    border-radius: 2px;
    appearance: none;
    background: #fff;
  }
`;

function Tool({ name, label, column, caret = true }: { name: string; label: string; column?: number; caret?: boolean }) {
  return (
    <ToolButton $column={column} aria-label={label}>
      <Icon name={name} />
      {caret && <Caret />}
    </ToolButton>
  );
}

function FormatPanel() {
  const rail = ["paintbrush", "list", "mark", "clover", "calendar", "upload"];
  const railLabels = ["格式", "大纲", "图标", "剪贴画", "任务", "导出"];
  return (
    <Panel>
      <PanelHeader>
        <PanelTitle>主题格式</PanelTitle>
        <BarButton $width={20} aria-label="固定面板"><Icon name="pin" size={18} /></BarButton>
      </PanelHeader>
      <PanelBody>
        <Rail aria-label="面板">
          {rail.map((name, i) => (
            <RailButton key={name} $active={i === 0} aria-label={railLabels[i]}>
              <Icon name={name} />
            </RailButton>
          ))}
        </Rail>
        <PanelContent>
          <ToolGrid>
            <Tool name="tiles" label="主题样式" />
            <Tool name="layout" label="布局" />
            <Tool name="branch" label="连接线" />
            <Tool name="numbering" label="编号" />
          </ToolGrid>
          <Divider />
          <SectionTitle $tight>形状：</SectionTitle>
          <ToolGrid>
            <Tool name="fill" label="填充" />
            <Tool name="dashedShape" label="形状" />
            <Tool name="shadow" label="阴影" />
            <Tool name="outline" label="线条颜色" column={1} />
            <Tool name="lineWidth" label="线条粗细" />
            <Tool name="lineDash" label="线条样式" />
            <Tool name="corner" label="圆角" />
          </ToolGrid>
          <SectionTitle>图片位置：</SectionTitle>
          <ToolGrid>
            <Tool name="imageLeft" label="图片位置" caret={false} />
            <Tool name="imageFrame" label="图片边框" />
          </ToolGrid>
          <SectionTitle>分支：</SectionTitle>
          <ToolGrid $gap={24}>
            <Tool name="fill" label="分支填充" />
            <Tool name="outline" label="分支颜色" />
            <Tool name="lineWidth" label="分支粗细" />
            <Tool name="branch" label="分支连接" column={1} />
            <Tool name="taper" label="分支渐变" />
            <Tool name="arrows" label="箭头" />
            <Tool name="lineDash" label="分支样式" />
          </ToolGrid>
          <SectionTitle>字体：</SectionTitle>
          <FontRow>
            <SelectBox $width={128}>
              <select aria-label="字体"><option>微软雅黑</option></select>
              <Caret width={7} />
            </SelectBox>
            <SelectBox $width={42}>
              <select aria-label="字号"><option>10</option></select>
              <Caret width={7} />
            </SelectBox>
            <SizeButton aria-label="增大字号">
              A
              <svg width="7" height="7" viewBox="0 0 7 7" stroke="currentColor" strokeWidth="2"><path d="M3.5 0V7M0 3.5H7" /></svg>
            </SizeButton>
            <SizeButton aria-label="减小字号">
              A
              <svg width="7" height="7" viewBox="0 0 7 7" stroke="currentColor" strokeWidth="2"><path d="M0 3.5H7" /></svg>
            </SizeButton>
          </FontRow>
          <FormatRow>
            <FormatButton aria-label="加粗"><Bold size={16} strokeWidth={3} /></FormatButton>
            <FormatButton aria-label="斜体"><Italic size={16} strokeWidth={3} /></FormatButton>
            <FormatButton aria-label="下划线"><Underline size={16} strokeWidth={2.6} /></FormatButton>
            <FormatButton aria-label="删除线"><Strikethrough size={17} strokeWidth={2.4} /></FormatButton>
            <FormatButton $width={31} aria-label="对齐"><Icon name="alignLeft" size={18} /><Caret /></FormatButton>
            <FormatButton $width={32} aria-label="背景色"><Swatch $color="#000">ab</Swatch><Caret /></FormatButton>
            <FormatButton $width={32} aria-label="文字颜色"><Swatch $color="#333">A</Swatch><Caret /></FormatButton>
            <FormatButton aria-label="更多格式"><Icon name="listBox" /></FormatButton>
          </FormatRow>
          <CheckLabel>
            <input type="checkbox" />
            同时改变所有同类型主题的字体
          </CheckLabel>
        </PanelContent>
      </PanelBody>
    </Panel>
  );
}

/* ---------- status bar ---------- */

const StatusBar = styled.footer`
  position: relative;
  display: flex;
  flex: none;
  align-items: center;
  justify-content: space-between;
  height: 32px;
  border-top: 1px solid #dcdcdc;
  color: ${INK};
`;

const StatusGroup = styled.div<{ $gap?: number }>`
  display: flex;
  align-items: center;
  gap: ${(p) => p.$gap ?? 0}px;
`;

const StatusCell = styled.div<{ $width: number; $pad?: number }>`
  display: flex;
  align-items: center;
  justify-content: ${(p) => (p.$pad ? "flex-start" : "center")};
  width: ${(p) => p.$width}px;
  height: 21px;
  padding-left: ${(p) => p.$pad ?? 0}px;
  border-right: 1px solid #c8c8c8;
`;

const PageTab = styled.button`
  color: #17a878;
  font-weight: 700;
`;

const SelectionInfo = styled.span`
  margin-right: 26px;
  white-space: nowrap;
`;

const StatusRight = styled(StatusGroup)`
  padding-right: 33px;
`;

const ZoomTools = styled(StatusGroup)`
  margin-left: 3px;
`;

const ZoomSlider = styled.input`
  width: 89px;
  height: 16px;
  margin: 0;
  appearance: none;
  background: linear-gradient(#999, #999) center / 100% 2px no-repeat;
  &::-webkit-slider-thumb {
    appearance: none;
    width: 6px;
    height: 13px;
    border: 1px solid #555;
    background: #fff;
  }
`;

const StepButton = styled.button`
  display: flex;
  color: ${INK};
`;

const Grip = styled.svg`
  position: absolute;
  right: 1px;
  bottom: 1px;
`;

function Status() {
  const [zoom, setZoom] = useState(23);
  return (
    <StatusBar>
      <StatusGroup>
        <StatusCell $width={49}>
          <BarButton aria-label="页面缩略图"><Icon name="filmstrip" /></BarButton>
        </StatusCell>
        <StatusCell $width={107} $pad={4}>
          <SelectBox $width={95} $plain>
            <select aria-label="页面"><option>页面-1</option></select>
            <Caret width={7} />
          </SelectBox>
        </StatusCell>
        <StatusCell $width={42}>
          <BarButton aria-label="新建页面"><Icon name="plus" /></BarButton>
        </StatusCell>
        <StatusCell $width={78}><PageTab>页面-1</PageTab></StatusCell>
      </StatusGroup>
      <StatusRight $gap={15}>
        <SelectionInfo>[子主题 173]</SelectionInfo>
        <StepButton aria-label="适合页面"><Icon name="fitPage" weight={1.2} /></StepButton>
        <StepButton aria-label="全屏"><Icon name="fullscreenBox" weight={1.2} /></StepButton>
        <ZoomTools $gap={8}>
          <StatusGroup $gap={6}>
            <StepButton aria-label="缩小">
              <svg width="10" height="10" stroke="currentColor"><path d="M0 5.5H10" /></svg>
            </StepButton>
            <ZoomSlider type="range" aria-label="缩放" value={zoom} onChange={(e) => setZoom(Number(e.target.value))} />
            <StepButton aria-label="放大">
              <svg width="10" height="10" stroke="currentColor"><path d="M0 5.5H10M5.5 0V10" /></svg>
            </StepButton>
          </StatusGroup>
          <SelectBox $width={44} $plain>
            <select aria-label="缩放比例"><option>100%</option></select>
            <Caret />
          </SelectBox>
        </ZoomTools>
        <StepButton aria-label="适合选区"><Icon name="focus" weight={1.2} /></StepButton>
        <StepButton aria-label="适合宽度"><Icon name="fitWidth" weight={1.2} /></StepButton>
      </StatusRight>
      <Grip width="12" height="12" fill="#bbb" aria-hidden="true">
        <path d="M8 0h2v2h-2zM8 4h2v2h-2zM4 4h2v2h-2zM8 8h2v2h-2zM4 8h2v2h-2zM0 8h2v2h-2z" />
      </Grip>
    </StatusBar>
  );
}

/* ---------- app ---------- */

type RibbonItem = [icon: string, label: string, menu?: boolean];

const ribbonGroups: RibbonItem[][] = [
  [["paste", "粘贴", true], ["cut", "剪切"], ["copy", "拷贝"], ["brush", "格式刷"]],
  [["topic", "主题", true], ["subtopic", "子主题"], ["floating", "浮动主题"], ["multi", "多个主题"]],
  [["relation", "关系线"], ["callout", "标注"], ["boundary", "外框"], ["summary", "概要"]],
  [["mark", "图标", true], ["clover", "剪贴画"], ["picture", "图片"], ["formula", "公式"], ["table", "表格", true]],
  [["link", "超链接"], ["clip", "附件"], ["note", "注释"], ["comment", "评论"], ["tag", "标签", true]],
  [["layout", "布局", true], ["numbering", "编号", true]],
];

const menus = ["文件", "开始", "页面样式", "幻灯片", "高级", "视图", "帮助"];

function SpacingField({ icon, label }: { icon: string; label: string }) {
  const [value, setValue] = useState(30);
  return (
    <>
      <Icon name={icon} />
      <Spinner>
        <input type="number" aria-label={label} value={value} onChange={(e) => setValue(Number(e.target.value))} />
        <SpinButtons>
          <button aria-label="增加" onClick={() => setValue(value + 1)}><Caret width={7} up /></button>
          <button aria-label="减少" onClick={() => setValue(value - 1)}><Caret width={7} /></button>
        </SpinButtons>
      </Spinner>
    </>
  );
}

export default function App() {
  return (
    <Shell>
      <GlobalStyle />
      <TitleBar>
        <TitleRow>
          <QuickTools>
            <Logo width="16" height="14" viewBox="0 0 16 14" fill="#fff" aria-hidden="true">
              <path d="M0 0H3.4L8 4.6 12.6 0H16V14H12.6L8 9.4 3.4 14H0ZM3 3.6V10.4L6.2 7ZM13 3.6 9.8 7 13 10.4Z" fillRule="evenodd" />
              <path d="M2 0.6 14 13.4" stroke="#fff" strokeWidth="3" />
            </Logo>
            <BarButton aria-label="撤销"><Icon name="undo" size={18} weight={1.3} /></BarButton>
            <BarButton $width={9} aria-label="撤销列表"><Caret /></BarButton>
            <BarButton aria-label="重做"><Icon name="redo" size={18} weight={1.3} /></BarButton>
            <BarButton aria-label="新建"><Icon name="newDoc" weight={1.2} /></BarButton>
            <BarButton aria-label="打开"><Icon name="folder" weight={1.2} /></BarButton>
            <BarButton aria-label="保存"><Icon name="save" weight={1.2} /></BarButton>
            <BarButton aria-label="打印"><Icon name="print" weight={1.2} /></BarButton>
            <BarButton aria-label="导出"><Icon name="exportDoc" weight={1.2} /></BarButton>
            <BarButton $width={7} aria-label="导出列表"><Caret /></BarButton>
            <BarButton $width={20} aria-label="自定义工具栏">
              <svg width="6" height="7" viewBox="0 0 6 7" fill="#fff"><path d="M0 0H6V1H0ZM0 3H6L3 7Z" /></svg>
            </BarButton>
          </QuickTools>
          <AppTitle>MindMaster Pro</AppTitle>
          <WindowControls>
            <BarButton $width={36} aria-label="最小化"><Icon name="minimize" /></BarButton>
            <BarButton $width={36} aria-label="最大化"><Icon name="maximize" /></BarButton>
            <BarButton $width={36} aria-label="关闭"><Icon name="close" /></BarButton>
          </WindowControls>
        </TitleRow>
        <MenuRow>
          <Menu>
            {menus.map((m, i) => (
              <MenuTab key={m} $first={i === 0} $active={i === 1}>{m}</MenuTab>
            ))}
          </Menu>
          <QuickTools>
            <BarButton aria-label="全屏"><Icon name="fullscreenBox" weight={1.1} /></BarButton>
            <BarButton aria-label="发送"><Icon name="plane" weight={1.1} /></BarButton>
            <BarButton aria-label="分享"><Icon name="share" weight={1.2} /></BarButton>
            <Account><AccountName>小M</AccountName><Caret /></Account>
            <BarButton aria-label="主题皮肤"><Icon name="shirt" weight={1.2} /></BarButton>
            <BarButton $width={9} aria-label="皮肤列表"><Caret /></BarButton>
            <BarButton aria-label="应用"><Icon name="apps" weight={1.2} /></BarButton>
            <BarButton aria-label="收起功能区"><Icon name="chevrons" weight={1.2} /></BarButton>
          </QuickTools>
        </MenuRow>
      </TitleBar>
      <Body>
        <Ribbon>
          {ribbonGroups.map((group) => (
            <RibbonGroup key={group[0][1]}>
              {group.map(([icon, label, menu]) => (
                <RibbonButton key={label}>
                  <Icon name={icon} />
                  <span>{label}</span>
                  {menu && <Caret />}
                </RibbonButton>
              ))}
            </RibbonGroup>
          ))}
          <RibbonGroup>
            <SpacingTools>
              <SpacingField icon="hgap" label="水平间距" />
              <SpacingField icon="vgap" label="垂直间距" />
            </SpacingTools>
            <RibbonButton>
              <Icon name="reset" />
              <span>重置</span>
            </RibbonButton>
          </RibbonGroup>
        </Ribbon>
        <Workspace>
          <Documents>
            <DocTabs>
              <DocTab>
                <DocName><Icon name="fileMark" size={14} />思维导图学习</DocName>
                <UnsavedDot />
              </DocTab>
              <DocTab $active>
                <DocName><Icon name="fileMark" size={14} />产品能力框架图</DocName>
                <CloseTab aria-label="关闭标签"><Icon name="close" size={20} /></CloseTab>
              </DocTab>
            </DocTabs>
            <CanvasGrid>
              <MindMap />
              <VTrack><Thumb $vertical /></VTrack>
              <HTrack><Thumb /></HTrack>
            </CanvasGrid>
          </Documents>
          <FormatPanel />
        </Workspace>
        <Status />
      </Body>
    </Shell>
  );
}
